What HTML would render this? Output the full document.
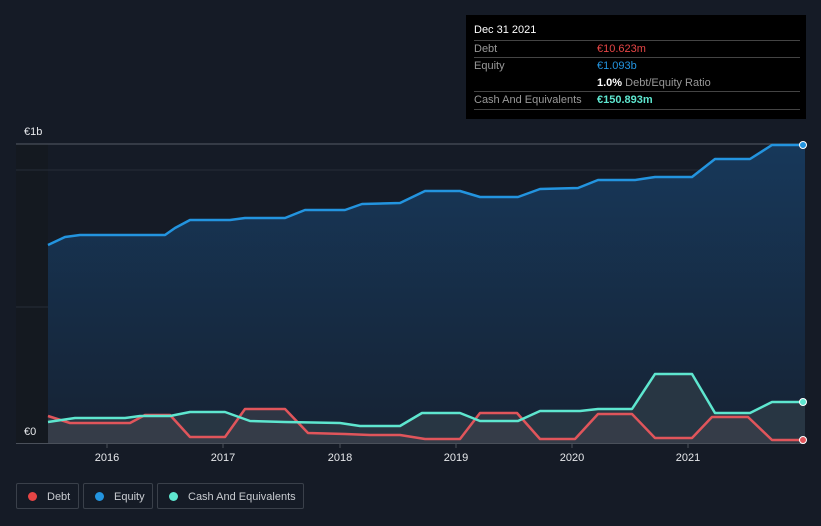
<!DOCTYPE html>
<html><head><style>
body{margin:0;width:821px;height:526px;background:#151b26;font-family:"Liberation Sans",sans-serif;overflow:hidden;position:relative}
.tt{position:absolute;left:466px;top:15px;width:340px;height:104px;background:#000;color:#fff;font-size:11px}
.row{position:absolute;left:8px;width:326px;border-bottom:1px solid #444}
.lg{position:absolute;top:483px;height:26px;border:1px solid #3a404a;border-radius:2px;color:#c9ccd1;font-size:11px;line-height:26px;box-sizing:border-box}
.lg i{display:inline-block;width:9px;height:9px;border-radius:50%;margin:0 10px 0 11px;vertical-align:-1px}
</style></head><body>
<svg width="821" height="526" style="position:absolute;left:0;top:0">
<defs>
<linearGradient id="eg" x1="0" y1="0" x2="0" y2="1"><stop offset="0" stop-color="#17385a"/><stop offset="1" stop-color="#162233"/></linearGradient>
</defs>
<rect x="16" y="144" width="32" height="299" fill="#141920"/>
<line x1="16" y1="144" x2="805" y2="144" stroke="#555b66" stroke-width="1"/>
<line x1="16" y1="170" x2="805" y2="170" stroke="#262d38" stroke-width="1"/>
<line x1="16" y1="307" x2="805" y2="307" stroke="#262d38" stroke-width="1"/>
<polygon fill="url(#eg)" points="48,245 65,237 80,235 130,235 165,235 175,228 190,220 230,220 245,218 285,218 305,210 345,210 362,204 400,203 425,191 460,191 480,197 518,197 540,189 578,188 598,180 635,180 655,177 692,177 715,159 750,159 772,145 805,145 805,443 48,443"/>
<polygon fill="#2a3845" opacity="0.9" points="48,422 75,418 125,418 140,416 170,416 190,412 225,412 250,421 285,422 340,423 360,426 400,426 422,413 460,413 480,421 518,421 540,411 580,411 598,409 632,409 655,374 692,374 715,413 750,413 772,402 805,402 805,443 48,443"/>
<polygon fill="#3a3f4a" opacity="0.7" points="48,416 70,423 130,423 145,415 170,415 190,437 225,437 245,409 285,409 308,433 345,434 370,435 400,435 425,439 460,439 480,413 517,413 540,439 575,439 598,414 632,414 655,438 692,438 712,417 748,417 772,440 805,440 805,443 48,443"/>
<polyline fill="none" stroke="#2394df" stroke-width="2.5" stroke-linejoin="round" points="48,245 65,237 80,235 130,235 165,235 175,228 190,220 230,220 245,218 285,218 305,210 345,210 362,204 400,203 425,191 460,191 480,197 518,197 540,189 578,188 598,180 635,180 655,177 692,177 715,159 750,159 772,145 805,145"/>
<polyline fill="none" stroke="#e0555b" stroke-width="2.5" stroke-linejoin="round" points="48,416 70,423 130,423 145,415 170,415 190,437 225,437 245,409 285,409 308,433 345,434 370,435 400,435 425,439 460,439 480,413 517,413 540,439 575,439 598,414 632,414 655,438 692,438 712,417 748,417 772,440 805,440"/>
<polyline fill="none" stroke="#5ee6cf" stroke-width="2.5" stroke-linejoin="round" points="48,422 75,418 125,418 140,416 170,416 190,412 225,412 250,421 285,422 340,423 360,426 400,426 422,413 460,413 480,421 518,421 540,411 580,411 598,409 632,409 655,374 692,374 715,413 750,413 772,402 805,402"/>
<line x1="16" y1="443.5" x2="805" y2="443.5" stroke="#4a505a"/>
<g stroke="#4a505a"><line x1="107" y1="443" x2="107" y2="448"/><line x1="223" y1="443" x2="223" y2="448"/><line x1="340" y1="443" x2="340" y2="448"/><line x1="456" y1="443" x2="456" y2="448"/><line x1="572" y1="443" x2="572" y2="448"/><line x1="688" y1="443" x2="688" y2="448"/></g>
<circle cx="803" cy="145" r="3.5" fill="#2394df" stroke="#fff" stroke-width="1"/>
<circle cx="803" cy="440" r="3.5" fill="#e0555b" stroke="#fff" stroke-width="1"/>
<circle cx="803" cy="402" r="3.5" fill="#5ee6cf" stroke="#fff" stroke-width="1"/>
<g font-family="Liberation Sans,sans-serif" font-size="11" fill="#e6e8eb">
<text x="24" y="135">€1b</text><text x="24" y="435">€0</text>
<g text-anchor="middle"><text x="107" y="461">2016</text><text x="223" y="461">2017</text><text x="340" y="461">2018</text><text x="456" y="461">2019</text><text x="572" y="461">2020</text><text x="688" y="461">2021</text></g>
</g>
</svg>
<div class="tt">
<div class="row" style="top:6px;height:19px;line-height:19px">Dec 31 2021</div>
<div class="row" style="top:26px;height:16px;line-height:16px;color:#999">Debt<span style="position:absolute;left:123px;color:#e64545">€10.623m</span></div>
<div class="row" style="top:43px;height:16px;line-height:16px;color:#999;border:0">Equity<span style="position:absolute;left:123px;color:#2394df">€1.093b</span></div>
<div class="row" style="top:60px;height:16px;line-height:16px;color:#999"><span style="position:absolute;left:123px"><b style="color:#fff">1.0%</b> Debt/Equity Ratio</span></div>
<div class="row" style="top:77px;height:17px;line-height:17px;color:#999">Cash And Equivalents<span style="position:absolute;left:123px;color:#5ee6cf;font-weight:bold">€150.893m</span></div>
</div>
<div class="lg" style="left:16px;width:63px"><i style="background:#e64545"></i>Debt</div>
<div class="lg" style="left:83px;width:70px"><i style="background:#2394df"></i>Equity</div>
<div class="lg" style="left:157px;width:147px"><i style="background:#5ee6cf"></i>Cash And Equivalents</div>
</body></html>
